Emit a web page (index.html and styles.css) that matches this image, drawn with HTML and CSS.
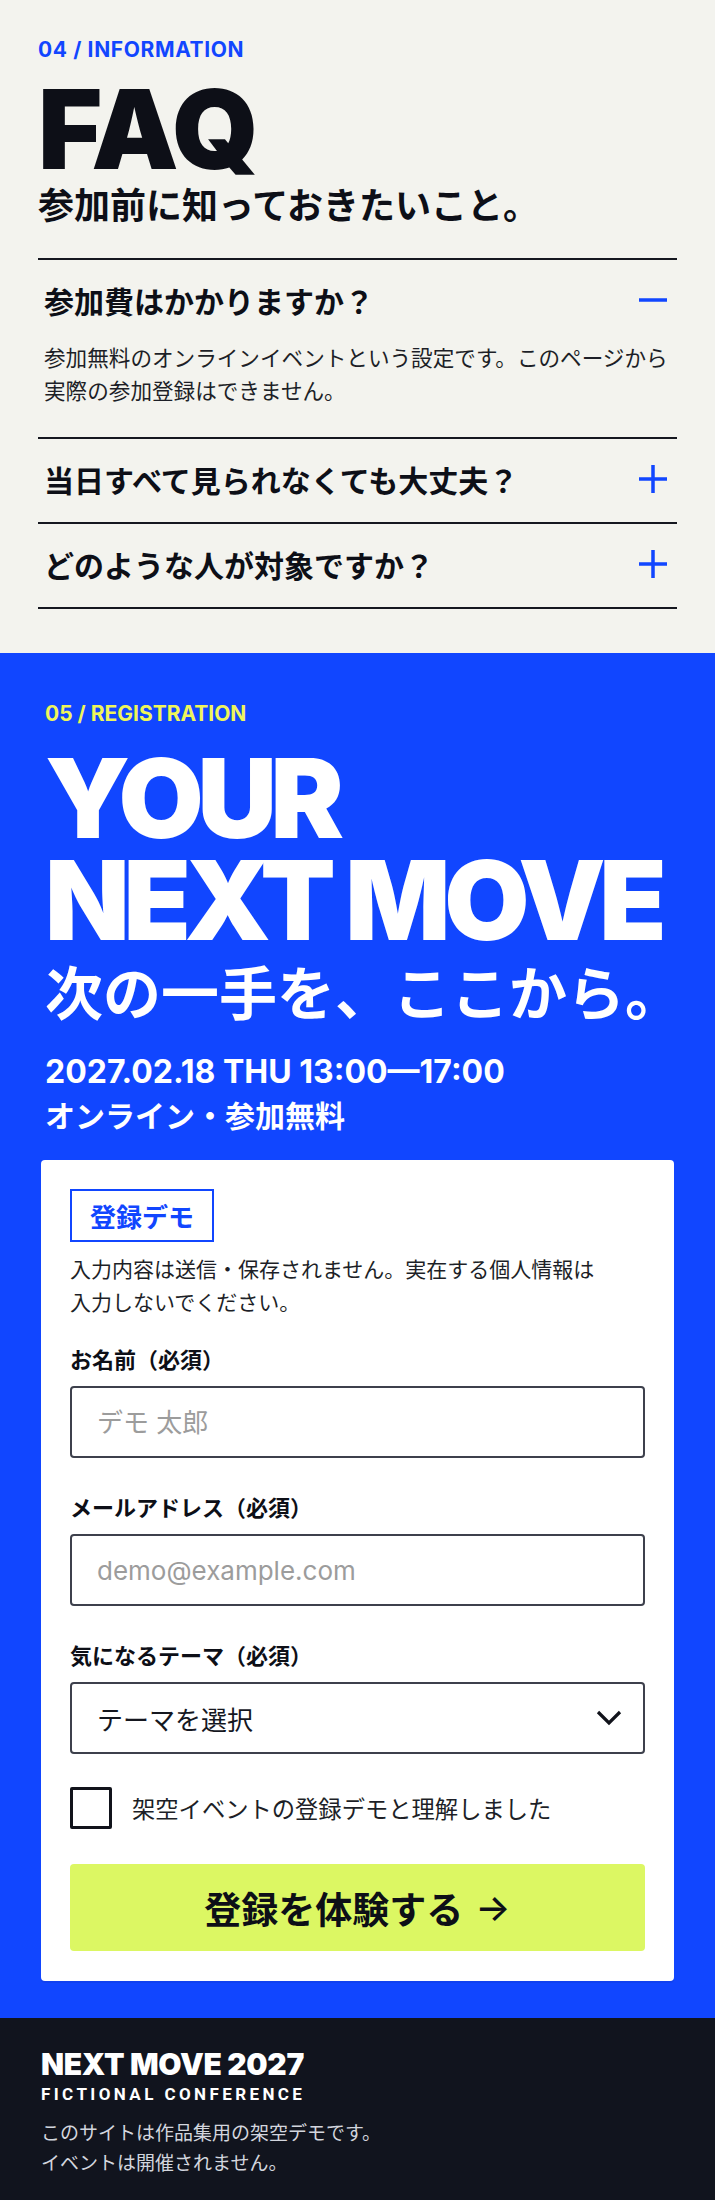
FILE: index.html
```html
<!DOCTYPE html>
<html lang="ja">
<head>
<meta charset="utf-8">
<title>NEXT MOVE 2027 — FAQ / Registration</title>
<link rel="stylesheet" href="styles.css">
</head>
<body>
<section class="faq">
  <p class="eyebrow eyebrow-faq">04 / INFORMATION</p>
  <h2 class="display faq-title">FAQ</h2>
  <p class="faq-sub">参加前に知っておきたいこと。</p>
  <div class="faq-list">
    <div class="faq-item">
      <div class="faq-q">
        <span>参加費はかかりますか？</span>
        <svg class="faq-icon" width="30" height="30" viewBox="0 0 30 30" aria-hidden="true"><path d="M1 15H29" stroke="#1146ff" stroke-width="3.5" fill="none"/></svg>
      </div>
      <p class="faq-a">参加無料のオンラインイベントという設定です。このページから<br>実際の参加登録はできません。</p>
    </div>
    <div class="faq-item">
      <div class="faq-q">
        <span>当日すべて見られなくても大丈夫？</span>
        <svg class="faq-icon" width="30" height="30" viewBox="0 0 30 30" aria-hidden="true"><path d="M1 15H29M15 1V29" stroke="#1146ff" stroke-width="3.5" fill="none"/></svg>
      </div>
    </div>
    <div class="faq-item">
      <div class="faq-q">
        <span>どのような人が対象ですか？</span>
        <svg class="faq-icon" width="30" height="30" viewBox="0 0 30 30" aria-hidden="true"><path d="M1 15H29M15 1V29" stroke="#1146ff" stroke-width="3.5" fill="none"/></svg>
      </div>
    </div>
  </div>
</section>

<section class="reg">
  <div class="reg-head">
    <p class="eyebrow eyebrow-reg">05 / REGISTRATION</p>
    <h2 class="display reg-title">YOUR<br>NEXT MOVE</h2>
    <p class="reg-sub">次の一手を、ここから。</p>
    <p class="reg-date">2027.02.18 THU 13:00—17:00</p>
    <p class="reg-online">オンライン・参加無料</p>
  </div>

  <form class="card" onsubmit="return false">
    <span class="badge">登録デモ</span>
    <p class="notice">入力内容は送信・保存されません。実在する個人情報は<br>入力しないでください。</p>

    <div class="field field-first">
      <label class="label" for="name">お名前（必須）</label>
      <input class="input" id="name" type="text" placeholder="デモ 太郎">
    </div>
    <div class="field">
      <label class="label" for="mail">メールアドレス（必須）</label>
      <input class="input" id="mail" type="email" placeholder="demo@example.com">
    </div>
    <div class="field">
      <span class="label">気になるテーマ（必須）</span>
      <div class="select">
        <span>テーマを選択</span>
        <svg width="28" height="18" viewBox="0 0 28 18" aria-hidden="true"><path d="M3 3L14 14L25 3" stroke="#11131b" stroke-width="3.2" fill="none"/></svg>
      </div>
    </div>

    <div class="check-row">
      <span class="checkbox"></span>
      <span class="check-label">架空イベントの登録デモと理解しました</span>
    </div>

    <div class="btn">登録を体験する <span class="arrow">→</span></div>
  </form>
</section>

<footer class="footer">
  <p class="foot-title">NEXT MOVE 2027</p>
  <p class="foot-sub">FICTIONAL CONFERENCE</p>
  <p class="foot-text">このサイトは作品集用の架空デモです。<br>イベントは開催されません。</p>
</footer>
</body>
</html>
```

FILE: styles.css
```css
* { box-sizing: border-box; }

body {
  margin: 0;
  background: #f3f3ee;
  color: #0d0f17;
  font-family: "Noto Sans CJK JP", sans-serif;
}

p, h2 { margin: 0; }

/* ---------- shared ---------- */
.eyebrow {
  font-family: Inter, "Noto Sans CJK JP", sans-serif;
  font-weight: 700;
  font-size: 21px;
  line-height: 28px;
}

.display {
  font-family: Inter, "Liberation Sans", sans-serif;
  font-weight: 900;
  font-size: 110px;
  white-space: nowrap;
}

/* ---------- FAQ ---------- */
.faq {
  background: #f3f3ee;
  padding: 36px 38px 44px;
}

.eyebrow-faq {
  color: #1146ff;
  letter-spacing: 0.03em;
  margin-bottom: 11px;
}

.faq-title {
  line-height: 108px;
  letter-spacing: -0.01em;
  color: #0d0f17;
  margin-bottom: -2px;
}

.faq-sub {
  font-weight: 700;
  font-size: 36px;
  line-height: 45px;
  margin-bottom: 32px;
}

.faq-list {
  border-top: 2px solid #15171f;
}

.faq-item {
  border-bottom: 2px solid #15171f;
  padding: 0 9px 0 6px;
}

.faq-q {
  display: flex;
  align-items: center;
  justify-content: space-between;
  padding: 19px 0 22px;
  font-weight: 700;
  font-size: 30px;
  line-height: 42px;
}

.faq-icon {
  flex: none;
}

.faq-a {
  margin-top: -3px;
  padding-bottom: 31px;
  font-size: 21.6px;
  line-height: 33px;
  color: #1d1f27;
}

/* ---------- Registration ---------- */
.reg {
  background: #1146ff;
  padding: 47px 41px 37px;
  color: #fff;
}

.reg-head {
  padding-left: 4px;
}

.eyebrow-reg {
  color: #eef55b;
  margin-bottom: 19px;
}

.reg-title {
  line-height: 102px;
  letter-spacing: -0.057em;
  color: #fff;
}

.reg-sub {
  margin-top: 5px;
  font-weight: 700;
  font-size: 58px;
  line-height: 68px;
  white-space: nowrap;
}

.reg-date {
  margin-top: 27px;
  font-family: Inter, "Noto Sans CJK JP", sans-serif;
  font-weight: 700;
  font-size: 32px;
  line-height: 42px;
}

.reg-online {
  font-weight: 700;
  font-size: 30px;
  line-height: 42px;
}

.card {
  margin: 25px 0 0;
  background: #fff;
  border-radius: 4px;
  padding: 29px 29px 30px;
  color: #0d0f17;
  box-shadow: 0 2px 0 rgba(0, 0, 0, 0.06);
}

.badge {
  display: block;
  width: max-content;
  border: 2px solid #1146ff;
  color: #1146ff;
  font-weight: 700;
  font-size: 26px;
  line-height: 37px;
  padding: 6px 18px;
}

.notice {
  margin-top: 10px;
  font-size: 21px;
  line-height: 33px;
  color: #1d1f27;
}

.field { margin-top: 33px; }
.field-first { margin-top: 25px; }

.label {
  display: block;
  font-weight: 700;
  font-size: 22px;
  line-height: 30px;
  margin-bottom: 13px;
}

.input {
  display: block;
  width: 100%;
  height: 72px;
  margin: 0;
  border: 2px solid #3d404c;
  border-radius: 4px;
  padding: 0 25px;
  background: #fff;
  font-family: Inter, "Noto Sans CJK JP", sans-serif;
  font-size: 26px;
  color: #0d0f17;
  outline: none;
}

.input::placeholder { color: #9c9c9c; opacity: 1; }

.select {
  display: flex;
  align-items: center;
  justify-content: space-between;
  height: 72px;
  border: 2px solid #3d404c;
  border-radius: 4px;
  padding: 0 20px 0 25px;
  font-size: 26px;
  color: #15171f;
}

.check-row {
  margin-top: 33px;
  display: flex;
  align-items: center;
  gap: 20px;
}

.checkbox {
  flex: none;
  width: 42px;
  height: 42px;
  border: 3px solid #11131b;
  border-radius: 2px;
  background: #fff;
}

.check-label {
  font-size: 23.3px;
  line-height: 34px;
  color: #1d1f27;
}

.btn {
  margin-top: 35px;
  height: 87px;
  border-radius: 4px;
  background: #dcf763;
  display: flex;
  align-items: center;
  justify-content: center;
  gap: 12px;
  font-weight: 700;
  font-size: 37px;
  color: #0d0f17;
}

.arrow {
  font-family: Inter, "Noto Sans CJK JP", sans-serif;
  font-weight: 500;
}

/* ---------- Footer ---------- */
.footer {
  background: #11141e;
  padding: 28px 41px 40px;
  color: #fff;
}

.foot-title {
  font-family: Inter, "Liberation Sans", sans-serif;
  font-weight: 900;
  font-size: 30px;
  line-height: 37px;
  letter-spacing: -0.01em;
}

.foot-sub {
  font-family: Roboto, "Liberation Sans", sans-serif;
  font-weight: 700;
  font-size: 17px;
  line-height: 22px;
  letter-spacing: 0.2em;
}

.foot-text {
  margin-top: 12px;
  font-size: 19px;
  line-height: 30px;
  color: #d3d6de;
}
```
